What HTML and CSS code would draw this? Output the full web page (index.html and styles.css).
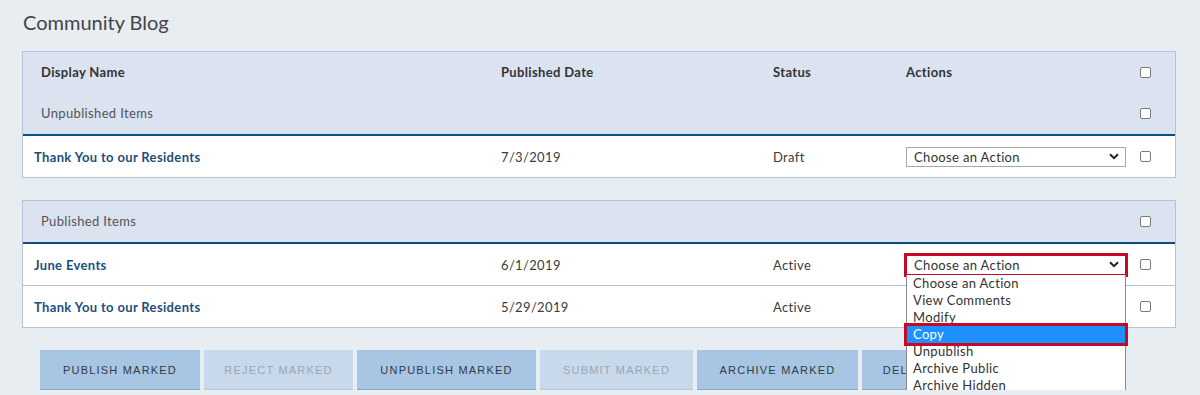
FILE: index.html
```html
<!DOCTYPE html>
<html lang="en">
<head>
<meta charset="utf-8">
<title>Community Blog</title>
<link rel="stylesheet" href="styles.css">
</head>
<body>
<div class="page">
  <h1 class="title">Community Blog</h1>

  <section class="panel">
    <div class="head">
      <div class="row cols head-row">
        <span class="c-name th">Display Name</span>
        <span class="th">Published Date</span>
        <span class="th">Status</span>
        <span class="th">Actions</span>
        <span class="c-chk"><i class="cb"></i></span>
      </div>
      <div class="row cols group-row">
        <span class="c-name group">Unpublished Items</span>
        <span></span><span></span><span></span>
        <span class="c-chk"><i class="cb"></i></span>
      </div>
    </div>
    <div class="row cols data-row">
      <span class="c-item">Thank You to our Residents</span>
      <span class="cell">7/3/2019</span>
      <span class="cell">Draft</span>
      <span class="cell"><span class="select">Choose an Action<svg class="chev" viewBox="0 0 10 7" width="10" height="7"><path d="M1 1.2 L5 5.2 L9 1.2" fill="none" stroke="#222" stroke-width="2"/></svg></span></span>
      <span class="c-chk"><i class="cb"></i></span>
    </div>
  </section>

  <section class="panel">
    <div class="head">
      <div class="row cols group-row">
        <span class="c-name group">Published Items</span>
        <span></span><span></span><span></span>
        <span class="c-chk"><i class="cb"></i></span>
      </div>
    </div>
    <div class="row cols data-row divided">
      <span class="c-item">June Events</span>
      <span class="cell">6/1/2019</span>
      <span class="cell">Active</span>
      <span class="cell">
        <span class="select-wrap">
          <span class="select open">Choose an Action<svg class="chev" viewBox="0 0 10 7" width="10" height="7"><path d="M1 1.2 L5 5.2 L9 1.2" fill="none" stroke="#222" stroke-width="2"/></svg></span>
          <ul class="menu">
            <li>Choose an Action</li>
            <li>View Comments</li>
            <li>Modify</li>
            <li class="active">Copy</li>
            <li>Unpublish</li>
            <li>Archive Public</li>
            <li>Archive Hidden</li>
          </ul>
        </span>
      </span>
      <span class="c-chk"><i class="cb"></i></span>
    </div>
    <div class="row cols data-row">
      <span class="c-item">Thank You to our Residents</span>
      <span class="cell">5/29/2019</span>
      <span class="cell">Active</span>
      <span class="cell"></span>
      <span class="c-chk"><i class="cb"></i></span>
    </div>
  </section>

  <div class="buttons">
    <button class="btn btn-publish">Publish Marked</button>
    <button class="btn btn-reject disabled">Reject Marked</button>
    <button class="btn btn-unpublish">Unpublish Marked</button>
    <button class="btn btn-submit disabled">Submit Marked</button>
    <button class="btn btn-archive">Archive Marked</button>
    <button class="btn btn-delete">Delete Marked</button>
  </div>
</div>
</body>
</html>
```

FILE: styles.css
```css
* { box-sizing: border-box; }

html, body {
  margin: 0;
  padding: 0;
  background: #e8edf2;
}

body {
  font-family: "Lato", "Noto Sans", sans-serif;
  font-size: 13px;
  letter-spacing: 0.35px;
  color: #3a3a3a;
  overflow: hidden;
}

.page {
  padding: 0 24px 0 22px;
}

.title {
  margin: 0;
  padding: 10px 0 0 1px;
  height: 51px;
  font-size: 20px;
  line-height: 24px;
  font-weight: 400;
  letter-spacing: 0;
  color: #444444;
}

.panel {
  width: 1154px;
  border: 1px solid #b3c4d8;
  background: #ffffff;
  margin-bottom: 22px;
}

.head {
  background: #dae3ef;
  border-bottom: 2px solid #0e4d80;
}

.cols {
  display: grid;
  grid-template-columns: 478px 272px 133px 234px 35px;
  align-items: center;
}

.row {
  height: 41px;
}

.head-row, .group-row {
  padding-bottom: 1px;
}

.data-row.divided {
  height: 42px;
  border-bottom: 1px solid #b3c4d8;
}

.c-name {
  padding-left: 18px;
}

.th {
  font-weight: 700;
  color: #333333;
}

.group {
  color: #555555;
}

.c-item {
  padding-left: 11px;
  font-weight: 700;
  color: #1d4f7c;
}

.cell {
  color: #3c3c3c;
}

.c-chk {
  display: flex;
  align-items: center;
}

.cb {
  display: block;
  width: 11px;
  height: 11px;
  border: 1px solid #7a7a7a;
  border-radius: 2px;
  background: #ffffff;
}

.select-wrap {
  position: relative;
  display: block;
  width: 220px;
}

.select {
  display: flex;
  align-items: center;
  justify-content: space-between;
  width: 220px;
  height: 20px;
  padding: 0 6px 0 7px;
  border: 1px solid #a8a8a8;
  background: #ffffff;
  color: #333333;
  line-height: 18px;
}

.select.open {
  outline: 3px solid #c40a26;
  outline-offset: -1px;
  border-color: #c40a26;
}

.chev {
  display: block;
}

.menu {
  position: absolute;
  z-index: 5;
  top: 20px;
  left: 0;
  width: 220px;
  margin: 0;
  padding: 0;
  list-style: none;
  background: #ffffff;
  border: 1px solid #8a8a8a;
  border-top: none;
}

.menu li {
  height: 17px;
  line-height: 17px;
  padding-left: 6px;
  color: #333333;
}

.menu li.active {
  background: #1e90ff;
  color: #ffffff;
  outline: 3px solid #c40a26;
  outline-offset: 0;
  position: relative;
}

.buttons {
  display: flex;
  gap: 4px;
  padding-left: 18px;
}

.btn {
  flex: none;
  height: 40px;
  border: none;
  border-bottom: 1px solid #86a8ca;
  background: #a8c6e3;
  font-family: "Liberation Sans", Arial, sans-serif;
  font-size: 11px;
  letter-spacing: 1.2px;
  text-transform: uppercase;
  text-align: center;
  color: #333a44;
  padding: 0;
  cursor: pointer;
}

.btn-publish { width: 160px; }
.btn-reject { width: 149px; }
.btn-unpublish { width: 179px; }
.btn-submit { width: 153px; }
.btn-archive { width: 161px; }
.btn-delete { width: 150px; }

.btn.disabled {
  background: #c7d9eb;
  color: #9ba6b1;
  border-bottom-color: #b4c9de;
}
```
